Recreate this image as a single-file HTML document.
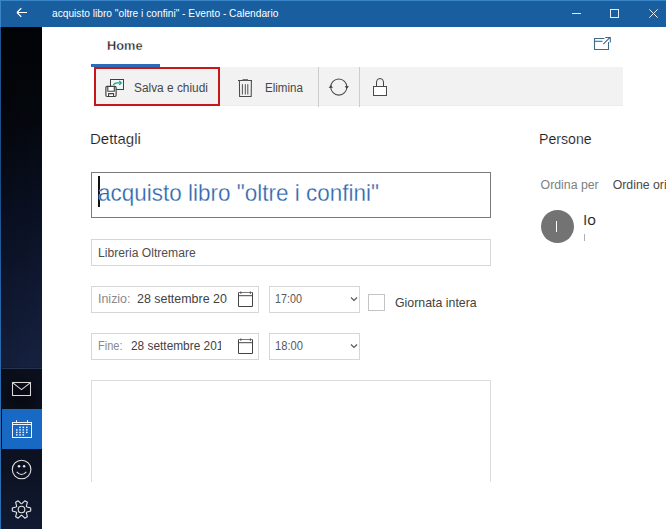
<!DOCTYPE html>
<html><head><meta charset="utf-8">
<style>
*{margin:0;padding:0;box-sizing:border-box}
html,body{width:666px;height:529px;overflow:hidden;background:#fff;font-family:"Liberation Sans",sans-serif;position:relative}
.a{position:absolute;white-space:nowrap;line-height:1}
#tb{left:0;top:0;width:666px;height:27px;background:#195e9f;border-top:1px solid #3a84c8}
#lb{left:0;top:0;width:1px;height:529px;background:linear-gradient(180deg,#3a84c8 0,#3a84c8 27px,#1d5590 27px,#1a4c84 180px,#2566a8 300px,#2a6cb0 400px,#2a70b4 529px)}
#sb{left:1px;top:27px;width:41px;height:502px;background:radial-gradient(ellipse 22px 22px at 21px 369px,rgba(0,0,0,.5),rgba(0,0,0,0)),linear-gradient(100deg,rgba(0,0,0,.3) 0,rgba(0,0,0,0) 70%),linear-gradient(180deg,#030407 0,#05080f 90px,#0a1124 180px,#111a35 270px,#15213f 340px,#0b0f1c 342px,#0c1222 440px,#111a32 502px)}
.box{position:absolute;border:1px solid #d6d6d6;background:#fff}
</style></head><body>
<div class="a" id="tb"></div>
<div class="a" id="sb"></div>
<div class="a" id="lb"></div>
<!-- back arrow -->
<svg class="a" style="left:14px;top:6px" width="16" height="14" viewBox="0 0 16 14">
<path d="M3 6.5H13M3 6.5L7.3 2.2M3 6.5L7.3 10.8" stroke="#fff" stroke-width="1.2" fill="none"/>
</svg>
<!-- window controls -->
<div class="a" style="left:572px;top:13px;width:9px;height:1px;background:#e4ecf5"></div>
<div class="a" style="left:610px;top:9px;width:9px;height:9px;border:1px solid #e4ecf5"></div>
<svg class="a" style="left:648px;top:8px" width="11" height="11" viewBox="0 0 11 11">
<path d="M1.3 1.3L9.7 9.7M9.7 1.3L1.3 9.7" stroke="#e8eef6" stroke-width="1"/>
</svg>

<!-- sidebar -->
<div class="a" style="left:2px;top:368px;width:40px;height:1px;background:#26344f"></div>
<svg class="a" style="left:11px;top:381px" width="22" height="16" viewBox="0 0 22 16">
<rect x="1.5" y="1.5" width="18" height="13" fill="none" stroke="#d8d8d8" stroke-width="1.05"/>
<path d="M1.8 1.8L10.5 8.6L19.2 1.8" fill="none" stroke="#d8d8d8" stroke-width="1.05"/>
</svg>
<div class="a" style="left:2px;top:409px;width:40px;height:40px;background:#1869c3"></div>
<svg class="a" style="left:11px;top:419px" width="22" height="21" viewBox="0 0 22 21">
<rect x="1.5" y="3.5" width="19" height="15" fill="none" stroke="#eef5ff" stroke-width="1"/>
<path d="M1.5 5.5H20.5" stroke="#eef5ff" stroke-width="1"/>
<path d="M5.5 1.2V4.2M16.5 1.2V4.2" stroke="#eef5ff" stroke-width="1"/>
<g fill="#f4f8ff"><rect x="8.2" y="7.7" width="1.6" height="1.4"/><rect x="11.5" y="7.7" width="1.6" height="1.4"/><rect x="15.0" y="7.7" width="1.6" height="1.4"/><rect x="5.0" y="10.2" width="1.6" height="1.4"/><rect x="8.2" y="10.2" width="1.6" height="1.4"/><rect x="11.5" y="10.2" width="1.6" height="1.4"/><rect x="15.0" y="10.2" width="1.6" height="1.4"/><rect x="5.0" y="12.7" width="1.6" height="1.4"/><rect x="8.2" y="12.7" width="1.6" height="1.4"/><rect x="11.5" y="12.7" width="1.6" height="1.4"/><rect x="15.0" y="12.7" width="1.6" height="1.4"/><rect x="5.0" y="15.2" width="1.6" height="1.4"/><rect x="8.2" y="15.2" width="1.6" height="1.4"/><rect x="11.5" y="15.2" width="1.6" height="1.4"/></g>
</svg>
<svg class="a" style="left:11px;top:459px" width="22" height="22" viewBox="0 0 22 22">
<circle cx="10.6" cy="10.5" r="9.3" fill="none" stroke="#e0e0e0" stroke-width="1.1"/>
<circle cx="8" cy="7.2" r="1.25" fill="#e8e8e8"/><circle cx="13.1" cy="7.2" r="1.25" fill="#e8e8e8"/>
<path d="M5.7 12.8Q10.5 18.2 15.3 12.8" fill="none" stroke="#e0e0e0" stroke-width="1.1"/>
</svg>
<svg class="a" style="left:11px;top:500px" width="22" height="21" viewBox="0 0 22 21">
<path id="gear" fill="none" stroke="#e8e8e8" stroke-width="1.1" stroke-linejoin="round" d="M16.07 7.02 L19.69 8.05 L19.69 10.95 L16.07 11.98 L15.44 12.35 L15.44 13.09 L16.35 16.73 L13.83 18.18 L11.14 15.57 L10.50 15.20 L9.86 15.57 L7.17 18.18 L4.65 16.73 L5.56 13.09 L5.56 12.35 L4.93 11.98 L1.31 10.95 L1.31 8.05 L4.93 7.02 L5.56 6.65 L5.56 5.91 L4.65 2.27 L7.17 0.82 L9.86 3.43 L10.50 3.80 L11.14 3.43 L13.83 0.82 L16.35 2.27 L15.44 5.91 L15.44 6.65Z"/>
<circle cx="10.5" cy="9.5" r="3.3" fill="none" stroke="#e0e0e0" stroke-width="1.1"/>
</svg>

<!-- tab -->
<div class="a" style="left:91px;top:64px;width:69px;height:3px;background:#2b6cb8"></div>
<!-- popout icon -->
<svg class="a" style="left:588px;top:32px" width="26" height="22" viewBox="0 0 26 22">
<path d="M16.5 6.5H6.5V17.5H20.5V10" fill="none" stroke="#3d6a88" stroke-width="1.1"/>
<path d="M6.5 9.3H14.5" stroke="#3d6a88" stroke-width="1.1"/>
<path d="M15.3 12.2L21.8 5.7M17.3 5.5H22.3V10.5" fill="none" stroke="#3d6a88" stroke-width="1.1"/>
</svg>

<!-- toolbar -->
<div class="a" style="left:94px;top:67px;width:529px;height:39px;background:#f2f2f2;border-bottom:1px solid #ececec"></div>
<div class="a" style="left:94px;top:67px;width:126px;height:39px;border:2px solid #c8161d"></div>
<svg class="a" style="left:100px;top:74px" width="28" height="26" viewBox="0 0 28 26">
<rect x="10.5" y="5.5" width="13" height="10" fill="#eef8f6" stroke="#404040" stroke-width="1"/>
<path d="M13.3 10.8Q14.8 8.9 17.5 8.9H21" fill="none" stroke="#2a9a8a" stroke-width="1.3"/>
<path d="M19.2 6.9L21.3 8.9L19.2 10.9" fill="none" stroke="#2a9a8a" stroke-width="1.3"/>
<rect x="5.9" y="12.4" width="10.2" height="10.1" rx="1.2" fill="#fff" stroke="#404040" stroke-width="1.2"/>
<path d="M7.8 12.6V17.3H14.3V12.6M8.6 22.4V19.6H13.6V22.4" fill="none" stroke="#404040" stroke-width="1.1"/>
</svg>
<svg class="a" style="left:232px;top:74px" width="26" height="26" viewBox="0 0 26 26">
<path d="M6 6.5H20M7.4 6.5L7.6 22.5H19.2L19.4 6.5" fill="none" stroke="#4a4a4a" stroke-width="1.05"/>
<path d="M10.5 5.8H16" stroke="#666" stroke-width="1.4"/>
<path d="M10.4 10.2V20.5M13.3 10.2V20.5M15.8 10.2V20.5" stroke="#4a4a4a" stroke-width="0.95"/>
</svg>
<div class="a" style="left:318px;top:67px;width:1px;height:40px;background:#cdcdcd"></div>
<div class="a" style="left:359px;top:67px;width:1px;height:40px;background:#cdcdcd"></div>
<svg class="a" style="left:326px;top:74px" width="26" height="26" viewBox="0 0 26 26">
<circle cx="12.8" cy="13" r="8.1" fill="none" stroke="#4a4a4a" stroke-width="1.05"/>
<path d="M18.6 12.3H23L20.8 14.8Z" fill="#3a3a3a"/>
<path d="M2.6 13.7H7L4.8 11.2Z" fill="#3a3a3a"/>
</svg>
<svg class="a" style="left:372px;top:77px" width="16" height="20" viewBox="0 0 16 20">
<path d="M4.5 9.5V5A3.5 3.5 0 0 1 11.5 5V9.5" fill="none" stroke="#444" stroke-width="1"/>
<rect x="1.5" y="9.5" width="13" height="9" fill="#fff" stroke="#4a4a4a" stroke-width="1"/>
</svg>

<!-- Dettagli -->

<div class="box" style="left:91px;top:172px;width:400px;height:46px;border-color:#7a7a7a"></div>
<div class="a" style="left:98px;top:176px;width:1.6px;height:31px;background:#111"></div>

<div class="box" style="left:91px;top:239px;width:400px;height:27px"></div>

<div class="box" style="left:91px;top:286px;width:168px;height:27px"></div>
<svg class="a" style="left:232px;top:286px" width="26" height="26" viewBox="0 0 26 26">
<path d="M6.5 6.5V20.5H20.5V6.5" fill="none" stroke="#444" stroke-width="1"/>
<path d="M6.5 6.5H20.5" stroke="#6a6a6a" stroke-width="0.9"/>
<path d="M6.5 9.7H20.5" stroke="#444" stroke-width="1"/>
<path d="M8.8 5.6V7.8M18.4 5.6V7.8" stroke="#555" stroke-width="1.2"/>
</svg>
<div class="box" style="left:269px;top:286px;width:91px;height:27px"></div>
<svg class="a" style="left:349.5px;top:296px" width="8" height="6" viewBox="0 0 8 6">
<path d="M1 1.5L4 4.5L7 1.5" fill="none" stroke="#555" stroke-width="1.1"/>
</svg>
<div class="a" style="left:368px;top:294px;width:17px;height:17px;border:1px solid #c4c4c4"></div>

<div class="box" style="left:91px;top:333px;width:168px;height:27px"></div>
<svg class="a" style="left:232px;top:333px" width="26" height="26" viewBox="0 0 26 26">
<path d="M6.5 6.5V20.5H20.5V6.5" fill="none" stroke="#444" stroke-width="1"/>
<path d="M6.5 6.5H20.5" stroke="#6a6a6a" stroke-width="0.9"/>
<path d="M6.5 9.7H20.5" stroke="#444" stroke-width="1"/>
<path d="M8.8 5.6V7.8M18.4 5.6V7.8" stroke="#555" stroke-width="1.2"/>
</svg>
<div class="box" style="left:269px;top:333px;width:91px;height:27px"></div>
<svg class="a" style="left:349.5px;top:343px" width="8" height="6" viewBox="0 0 8 6">
<path d="M1 1.5L4 4.5L7 1.5" fill="none" stroke="#555" stroke-width="1.1"/>
</svg>

<div class="a" style="left:91px;top:380px;width:400px;height:102px;border:1px solid #dcdcdc;border-bottom:none"></div>

<!-- persone -->
<div class="a" style="left:541px;top:209.5px;width:33px;height:33px;border-radius:50%;background:#737373"></div>
<div class="a" style="left:555.8px;top:221px;width:1.7px;height:11px;background:#fff"></div>
<div class="a" style="left:583.6px;top:233.5px;width:1.3px;height:7.5px;background:#b0b0b0"></div>
<div class="a" id="ttl" style="left:52px;top:8.5px;font-size:10.2px;color:#ffffff;">acquisto libro "oltre i confini" - Evento - Calendario</div>
<div class="a" id="home" style="left:106.5px;top:39.5px;font-size:12.8px;color:#1e1e1e;font-weight:bold;transform:scaleX(1.001);transform-origin:0 0;-webkit-text-stroke:0.35px #fff;">Home</div>
<div class="a" id="salva" style="left:133.8px;top:81.6px;font-size:12.5px;color:#464646;transform:scaleX(0.95);transform-origin:0 0;">Salva e chiudi</div>
<div class="a" id="elim" style="left:264.8px;top:81.6px;font-size:12.5px;color:#464646;transform:scaleX(0.925);transform-origin:0 0;">Elimina</div>
<div class="a" id="dett" style="left:90.0px;top:130.8px;font-size:15px;color:#222222;-webkit-text-stroke:0.15px #fff;">Dettagli</div>
<div class="a" id="pers" style="left:538.5px;top:131.6px;font-size:14.5px;color:#222222;transform:scaleX(0.976);transform-origin:0 0;-webkit-text-stroke:0.15px #fff;">Persone</div>
<div class="a" id="title" style="left:98.0px;top:180.5px;font-size:23.8px;color:#2a64aa;transform:scaleX(0.945);transform-origin:0 0;-webkit-text-stroke:0.3px #fff;">acquisto libro "oltre i confini"</div>
<div class="a" id="loc" style="left:98.0px;top:246.5px;font-size:12px;color:#4e4e4e;transform:scaleX(1.011);transform-origin:0 0;">Libreria Oltremare</div>
<div class="a" id="iniz" style="left:98.0px;top:292.5px;font-size:12px;color:#8a8a8a;transform:scaleX(1.036);transform-origin:0 0;">Inizio:</div>
<div class="a" id="d1" style="left:137.4px;top:292.5px;font-size:12px;color:#424242;transform:scaleX(1.036);transform-origin:0 0;width:86.5px;overflow:hidden;">28 settembre 2016</div>
<div class="a" id="t1" style="left:274.8px;top:292.5px;font-size:12px;color:#585858;transform:scaleX(0.894);transform-origin:0 0;">17:00</div>
<div class="a" id="gio" style="left:395.0px;top:296.5px;font-size:12.2px;color:#424242;transform:scaleX(1.013);transform-origin:0 0;">Giornata intera</div>
<div class="a" id="fine" style="left:98.0px;top:339.5px;font-size:12px;color:#8a8a8a;transform:scaleX(0.92);transform-origin:0 0;">Fine:</div>
<div class="a" id="d2" style="left:130.6px;top:339.5px;font-size:12px;color:#424242;transform:scaleX(0.989);transform-origin:0 0;width:91px;overflow:hidden;">28 settembre 2016</div>
<div class="a" id="t2" style="left:275.0px;top:339.5px;font-size:12px;color:#585858;transform:scaleX(0.93);transform-origin:0 0;">18:00</div>
<div class="a" id="ord" style="left:540.6px;top:179.0px;font-size:12.3px;color:#808080;">Ordina per</div>
<div class="a" id="io" style="left:582.5px;top:212.0px;font-size:15px;color:#222222;transform:scaleX(1.039);transform-origin:0 0;-webkit-text-stroke:0.15px #fff;">Io</div>
<div class="a" id="ord2" style="left:612.7px;top:179.0px;font-size:12.3px;color:#4a4a4a;">Ordine originale</div>
</body></html>
